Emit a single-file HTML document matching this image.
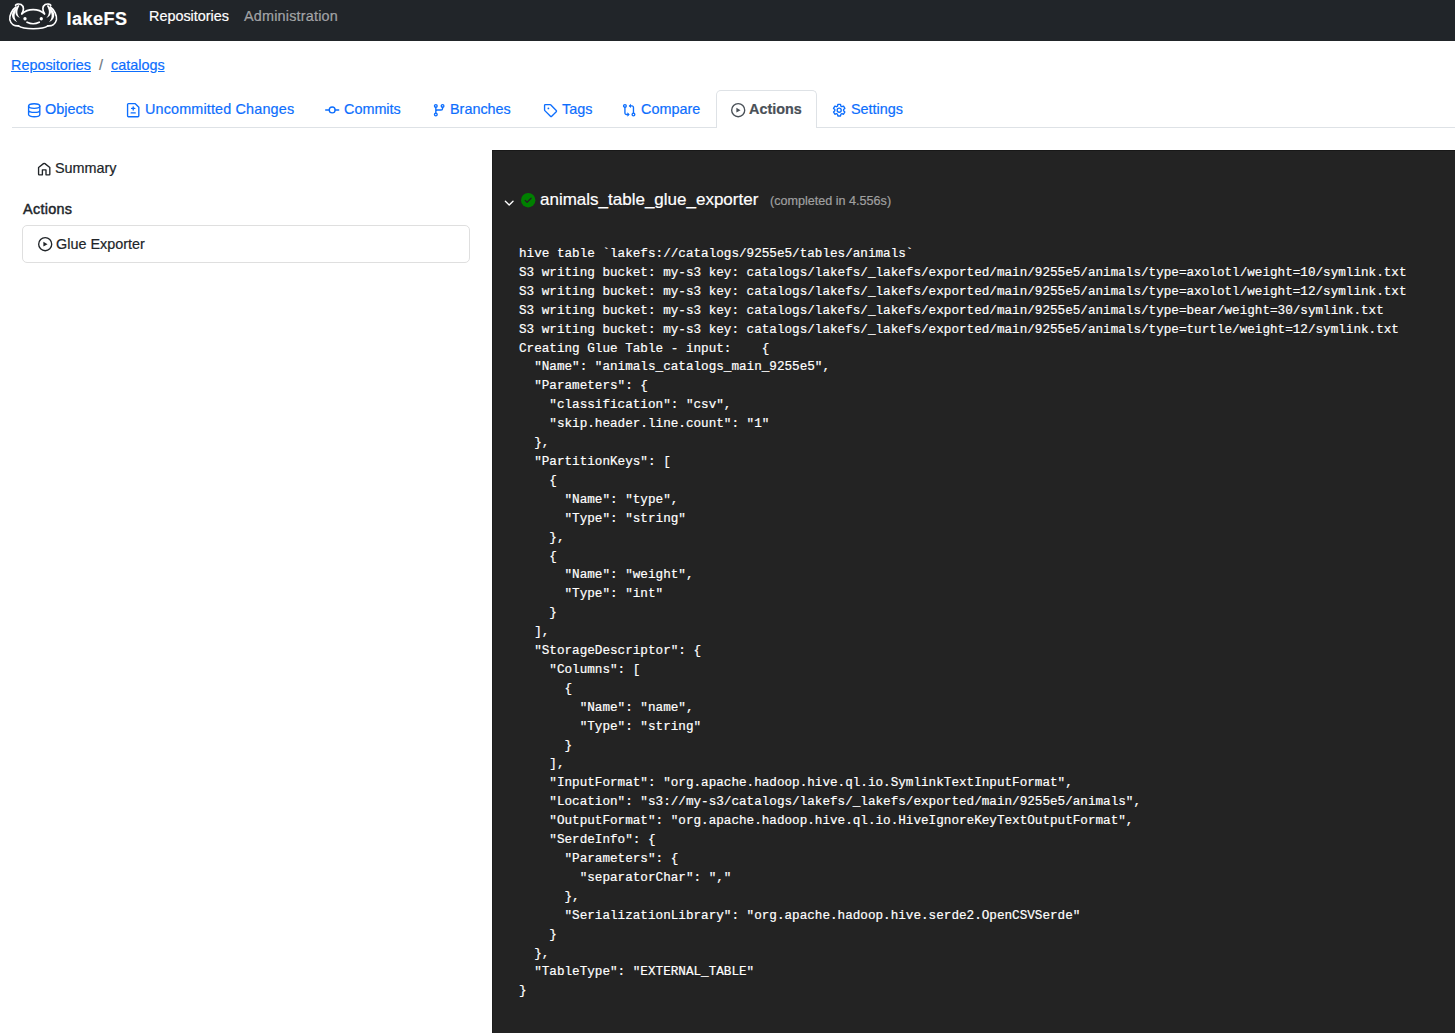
<!DOCTYPE html>
<html><head><meta charset="utf-8">
<style>
*{box-sizing:border-box;margin:0;padding:0}
html,body{width:1455px;height:1033px;overflow:hidden;background:#fff}
body{font-family:"Liberation Sans",sans-serif;font-size:14.4px;line-height:21.6px;color:#212529;position:relative;-webkit-text-stroke:0.2px currentColor}
.abs{position:absolute;white-space:pre}
#nav{position:absolute;left:0;top:0;width:1455px;height:41px;background:#212529}
.blue{color:#0d6efd}
a{color:#0d6efd;text-decoration:underline}
.tabline{position:absolute;left:12px;top:127px;width:1443px;height:1px;background:#dee2e6}
.acttab{position:absolute;left:716px;top:90px;width:101px;height:38px;border:1px solid #dee2e6;border-bottom:none;border-radius:5px 5px 0 0;background:#fff}
.card{position:absolute;left:22px;top:225px;width:448px;height:38px;border:1px solid #dfdfdf;border-radius:5px}
#panel{position:absolute;left:492px;top:150px;width:963px;height:883px;background:#232323;border-top:1px solid #181818;border-left:1px solid #1c1c1c}
pre{position:absolute;left:519px;top:245px;font-family:"Liberation Mono",monospace;font-size:12.65px;line-height:18.9px;color:#fff;white-space:pre;-webkit-text-stroke:0.2px #fff}
svg{position:absolute;overflow:visible}
.ic{width:14.4px;height:14.4px}
.st{fill:none;stroke:currentColor;stroke-width:1.5;stroke-linecap:round;stroke-linejoin:round}
</style></head><body>
<div id="nav"></div>
<!-- logo -->
<svg style="left:5px;top:0;width:60px;height:36px" viewBox="0 0 1455 873">
 <g fill="none" stroke="#fff" stroke-width="42" stroke-linecap="round" stroke-linejoin="round">
  <path d="M325 628 C450 720 920 720 1040 628"/>
  <path d="M412 330 C550 200 815 200 953 330"/>
  <path d="M535 540 Q682 612 830 540"/>
 </g>
 <g id="lg" transform="translate(48.5 24.25) scale(0.7278)">
  <g fill="none" stroke="#fff" stroke-width="56" stroke-linecap="round" stroke-linejoin="round">
   <path d="M490 430 C560 330 580 180 470 118 C400 85 310 100 285 140"/>
   <path d="M300 200 C170 290 70 480 95 630 C130 780 260 840 380 830"/>
  </g>
  <path fill="#fff" d="M320 205 C130 350 90 580 345 705 C230 590 220 420 345 225 Z"/>
  <path fill="#fff" d="M370 135 C230 300 240 490 435 570 C320 450 320 320 415 160 Z"/>
 </g>
 <use href="#lg" transform="translate(1365.2 0) scale(-1 1)"/>
 <circle cx="485" cy="455" r="40" fill="#fff"/>
 <circle cx="880" cy="455" r="40" fill="#fff"/>
</svg>
<div class="abs" style="left:66.5px;top:4px;font-weight:700;font-size:18px;letter-spacing:0.5px;line-height:30px;color:#fff">lakeFS</div>
<div class="abs" style="left:149px;top:6px;color:#fff">Repositories</div>
<div class="abs" style="left:244px;top:6px;letter-spacing:0.2px;color:rgba(255,255,255,.55)">Administration</div>

<div class="abs" style="left:11px;top:55px"><a href="#r">Repositories</a></div>
<div class="abs" style="left:99px;top:55px;color:#6c757d">/</div>
<div class="abs" style="left:111px;top:55px"><a href="#c">catalogs</a></div>

<div class="tabline"></div>
<div class="acttab"></div>
<!-- tab icons -->
<svg class="ic blue" style="left:27.1px;top:103px" viewBox="0 0 16 16"><g class="st"><ellipse cx="8" cy="3.4" rx="6.25" ry="2.6"/><path d="M1.75 3.4V12.75A6.25 2.5 0 0 0 14.25 12.75V3.4M1.75 8A6.25 2.5 0 0 0 14.25 8"/></g></svg>
<div class="abs blue" style="left:45px;top:99px">Objects</div>
<svg class="ic blue" style="left:126.1px;top:103px" viewBox="0 0 16 16"><g class="st"><path d="M1.75 1.75a1 1 0 0 1 1-1H10.3L14.25 4.7V14.25a1 1 0 0 1-1 1H2.75a1 1 0 0 1-1-1Z"/><path d="M8 4.25v3.5M6.25 6h3.5M5.75 11h4.5"/></g></svg>
<div class="abs blue" style="left:145px;top:99px;letter-spacing:0.15px">Uncommitted Changes</div>
<svg class="ic blue" style="left:324.9px;top:103px" viewBox="0 0 16 16"><g class="st"><circle cx="8" cy="7.75" r="3.25"/><path d="M.75 7.75H4.75M11.25 7.75H15.25"/></g></svg>
<div class="abs blue" style="left:344px;top:99px">Commits</div>
<svg class="ic blue" style="left:432.1px;top:103px" viewBox="0 0 16 16"><g class="st"><circle cx="4.25" cy="3.25" r="1.5"/><circle cx="11.75" cy="3.25" r="1.5"/><circle cx="4.25" cy="12.75" r="1.5"/><path d="M4.25 4.75V11.25M11.75 4.75V6a1.75 1.75 0 0 1-1.75 1.75H6a1.75 1.75 0 0 0-1.75 1.75"/></g></svg>
<div class="abs blue" style="left:450px;top:99px">Branches</div>
<svg class="ic blue" style="left:543.2px;top:103px" viewBox="0 0 16 16"><g class="st"><path d="M1.75 2.75a1 1 0 0 1 1-1h5.025a1 1 0 0 1 .707.293l6.25 6.25a1 1 0 0 1 0 1.414l-5.025 5.025a1 1 0 0 1-1.414 0l-6.25-6.25a1 1 0 0 1-.293-.707Z"/></g><circle cx="6" cy="6" r="1" fill="currentColor"/></svg>
<div class="abs blue" style="left:562px;top:99px">Tags</div>
<svg class="ic blue" style="left:622px;top:103px" viewBox="0 0 16 16"><g class="st"><circle cx="3.25" cy="3.25" r="1.5"/><circle cx="12.75" cy="12.75" r="1.5"/><path d="M3.25 4.75V11a1.75 1.75 0 0 0 1.75 1.75H7M12.75 11.25V5a1.75 1.75 0 0 0-1.75-1.75H9"/></g><path fill="currentColor" d="M6 10.35L8.6 12.75L6 15.15ZM10 .85L7.4 3.25L10 5.65Z"/></svg>
<div class="abs blue" style="left:641px;top:99px">Compare</div>
<svg class="ic" style="left:730.9px;top:103px;color:#495057" viewBox="0 0 16 16"><circle class="st" cx="8" cy="8" r="7.25"/><path fill="currentColor" d="M6 5.4L10.6 8L6 10.6Z"/></svg>
<div class="abs" style="left:749px;top:99px;font-weight:700;color:#495057">Actions</div>
<svg class="ic blue" style="left:832px;top:103px" viewBox="0 0 16 16"><g class="st"><path d="M6.52 1.57 L9.48 1.57 L9.84 3.46 L11.02 4.14 L12.83 3.50 L14.31 6.07 L12.85 7.32 L12.85 8.68 L14.31 9.93 L12.83 12.50 L11.02 11.86 L9.84 12.54 L9.48 14.43 L6.52 14.43 L6.16 12.54 L4.98 11.86 L3.17 12.50 L1.69 9.93 L3.15 8.68 L3.15 7.32 L1.69 6.07 L3.17 3.50 L4.98 4.14 L6.16 3.46Z"/><circle cx="8" cy="8" r="2.25"/></g></svg>
<div class="abs blue" style="left:851px;top:99px">Settings</div>

<svg class="ic" style="left:37.3px;top:162px;color:#212529" viewBox="0 0 16 16"><path class="st" d="M1.75 6.1L7.2 1.8Q8 1.15 8.8 1.8L14.25 6.1V13.5a.75.75 0 0 1-.75.75H10V8.75H6V14.25H2.5a.75.75 0 0 1-.75-.75Z"/></svg>
<div class="abs" style="left:55px;top:158px">Summary</div>
<div class="abs" style="left:23px;top:199px;-webkit-text-stroke:0.45px #212529;letter-spacing:0.3px">Actions</div>
<div class="card"></div>
<svg class="ic" style="left:38px;top:236.8px;color:#212529" viewBox="0 0 16 16"><circle class="st" cx="8" cy="8" r="7.25"/><path fill="currentColor" d="M6 5.4L10.6 8L6 10.6Z"/></svg>
<div class="abs" style="left:56px;top:234px">Glue Exporter</div>

<div id="panel"></div>
<svg class="ic" style="left:502.1px;top:195.8px;color:#fff" viewBox="0 0 16 16"><path class="st" d="M3.75 5.75L8 10L12.25 5.75"/></svg>
<svg class="ic" style="left:521px;top:193px" viewBox="0 0 16 16"><circle cx="8" cy="8" r="8" fill="#008000"/><path d="M4.75 8.25L6.75 10.25L11.25 5.75" fill="none" stroke="#232323" stroke-width="1.5" stroke-linecap="round" stroke-linejoin="round"/></svg>
<div class="abs" style="left:540px;top:188px;font-size:17px;line-height:24px;color:#fff">animals_table_glue_exporter</div>
<div class="abs" style="left:770px;top:192px;font-size:12.6px;line-height:18.9px;color:#a0a0a0">(completed in 4.556s)</div>
<pre>hive table `lakefs://catalogs/9255e5/tables/animals`
S3 writing bucket: my-s3 key: catalogs/lakefs/_lakefs/exported/main/9255e5/animals/type=axolotl/weight=10/symlink.txt
S3 writing bucket: my-s3 key: catalogs/lakefs/_lakefs/exported/main/9255e5/animals/type=axolotl/weight=12/symlink.txt
S3 writing bucket: my-s3 key: catalogs/lakefs/_lakefs/exported/main/9255e5/animals/type=bear/weight=30/symlink.txt
S3 writing bucket: my-s3 key: catalogs/lakefs/_lakefs/exported/main/9255e5/animals/type=turtle/weight=12/symlink.txt
Creating Glue Table - input:    {
  "Name": "animals_catalogs_main_9255e5",
  "Parameters": {
    "classification": "csv",
    "skip.header.line.count": "1"
  },
  "PartitionKeys": [
    {
      "Name": "type",
      "Type": "string"
    },
    {
      "Name": "weight",
      "Type": "int"
    }
  ],
  "StorageDescriptor": {
    "Columns": [
      {
        "Name": "name",
        "Type": "string"
      }
    ],
    "InputFormat": "org.apache.hadoop.hive.ql.io.SymlinkTextInputFormat",
    "Location": "s3://my-s3/catalogs/lakefs/_lakefs/exported/main/9255e5/animals",
    "OutputFormat": "org.apache.hadoop.hive.ql.io.HiveIgnoreKeyTextOutputFormat",
    "SerdeInfo": {
      "Parameters": {
        "separatorChar": ","
      },
      "SerializationLibrary": "org.apache.hadoop.hive.serde2.OpenCSVSerde"
    }
  },
  "TableType": "EXTERNAL_TABLE"
}</pre>
</body></html>
